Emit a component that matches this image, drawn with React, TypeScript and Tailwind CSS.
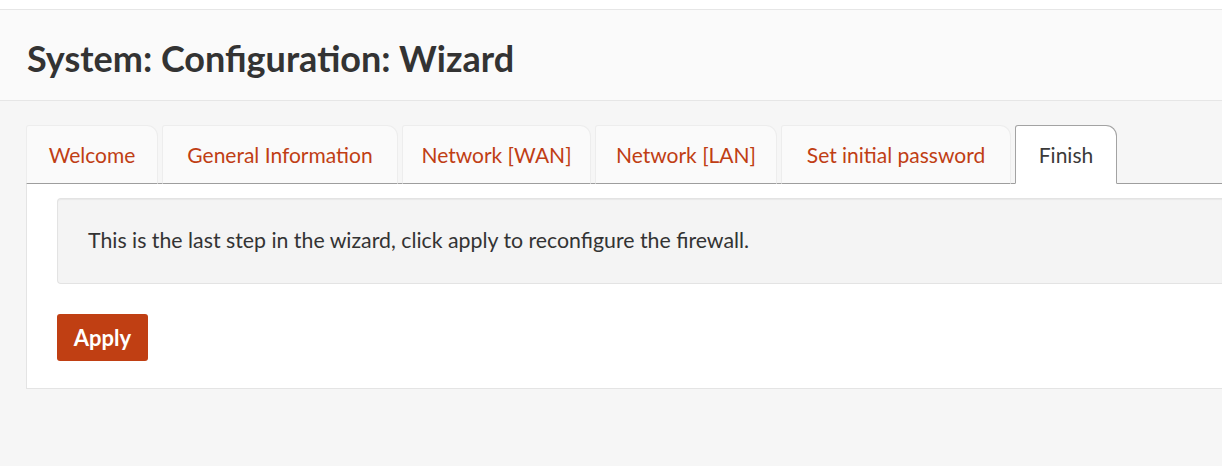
import React from 'react';

const tabs = [
  { label: 'Welcome', w: 'w-[132px]' },
  { label: 'General Information', w: 'w-[236px]' },
  { label: 'Network [WAN]', w: 'w-[189px]' },
  { label: 'Network [LAN]', w: 'w-[182px]' },
  { label: 'Set initial password', w: 'w-[230px]' },
  { label: 'Finish', w: 'w-[102px]' },
];

export default function App() {
  const active = 'Finish';

  return (
    <div className="min-h-[466px] bg-[#f6f6f6] text-[#333] font-['Lato',_'Liberation_Sans',_sans-serif]">
      {/* top strip + page header */}
      <div className="h-[9px] bg-white" />
      <div className="h-[92px] bg-[#fafafa] border-y border-[#e6e6e6] flex items-center px-[27px]">
        <h1 className="text-[36px] font-bold leading-none pt-[6px]">System: Configuration: Wizard</h1>
      </div>

      <div className="pt-[24px] pl-[26px]">
        {/* tabs */}
        <ul className="flex gap-[4px] border-b border-[#9e9e9e]">
          {tabs.map((t) => (
            <li
              key={t.label}
              className={`-mb-px h-[59px] flex items-center justify-center rounded-tl-[3px] rounded-tr-[11px] border text-[21px] ${t.w} ${
                t.label === active
                  ? 'bg-white border-[#a3a3a3] border-b-white text-[#3a3a3a]'
                  : 'bg-[#fafafa] border-[#ededed] border-b-[#9e9e9e] text-[#c03e14]'
              }`}
            >
              {t.label}
            </li>
          ))}
        </ul>

        {/* tab content */}
        <div className="bg-white border-l border-b border-[#e4e4e4] pl-[30px] pt-[14px] pb-[27px]">
          <div className="h-[86px] flex items-center pl-[30px] bg-[#f4f4f4] border border-r-0 border-[#e3e3e3] rounded-l-[4px] shadow-[inset_0_1px_1px_rgba(0,0,0,0.05)] text-[21.3px] text-[#333]">
            This is the last step in the wizard, click apply to reconfigure the firewall.
          </div>
          <button className="mt-[30px] h-[47px] w-[91px] rounded-[3px] bg-[#c03f13] text-white text-[22px] font-bold">
            Apply
          </button>
        </div>
      </div>
    </div>
  );
}
